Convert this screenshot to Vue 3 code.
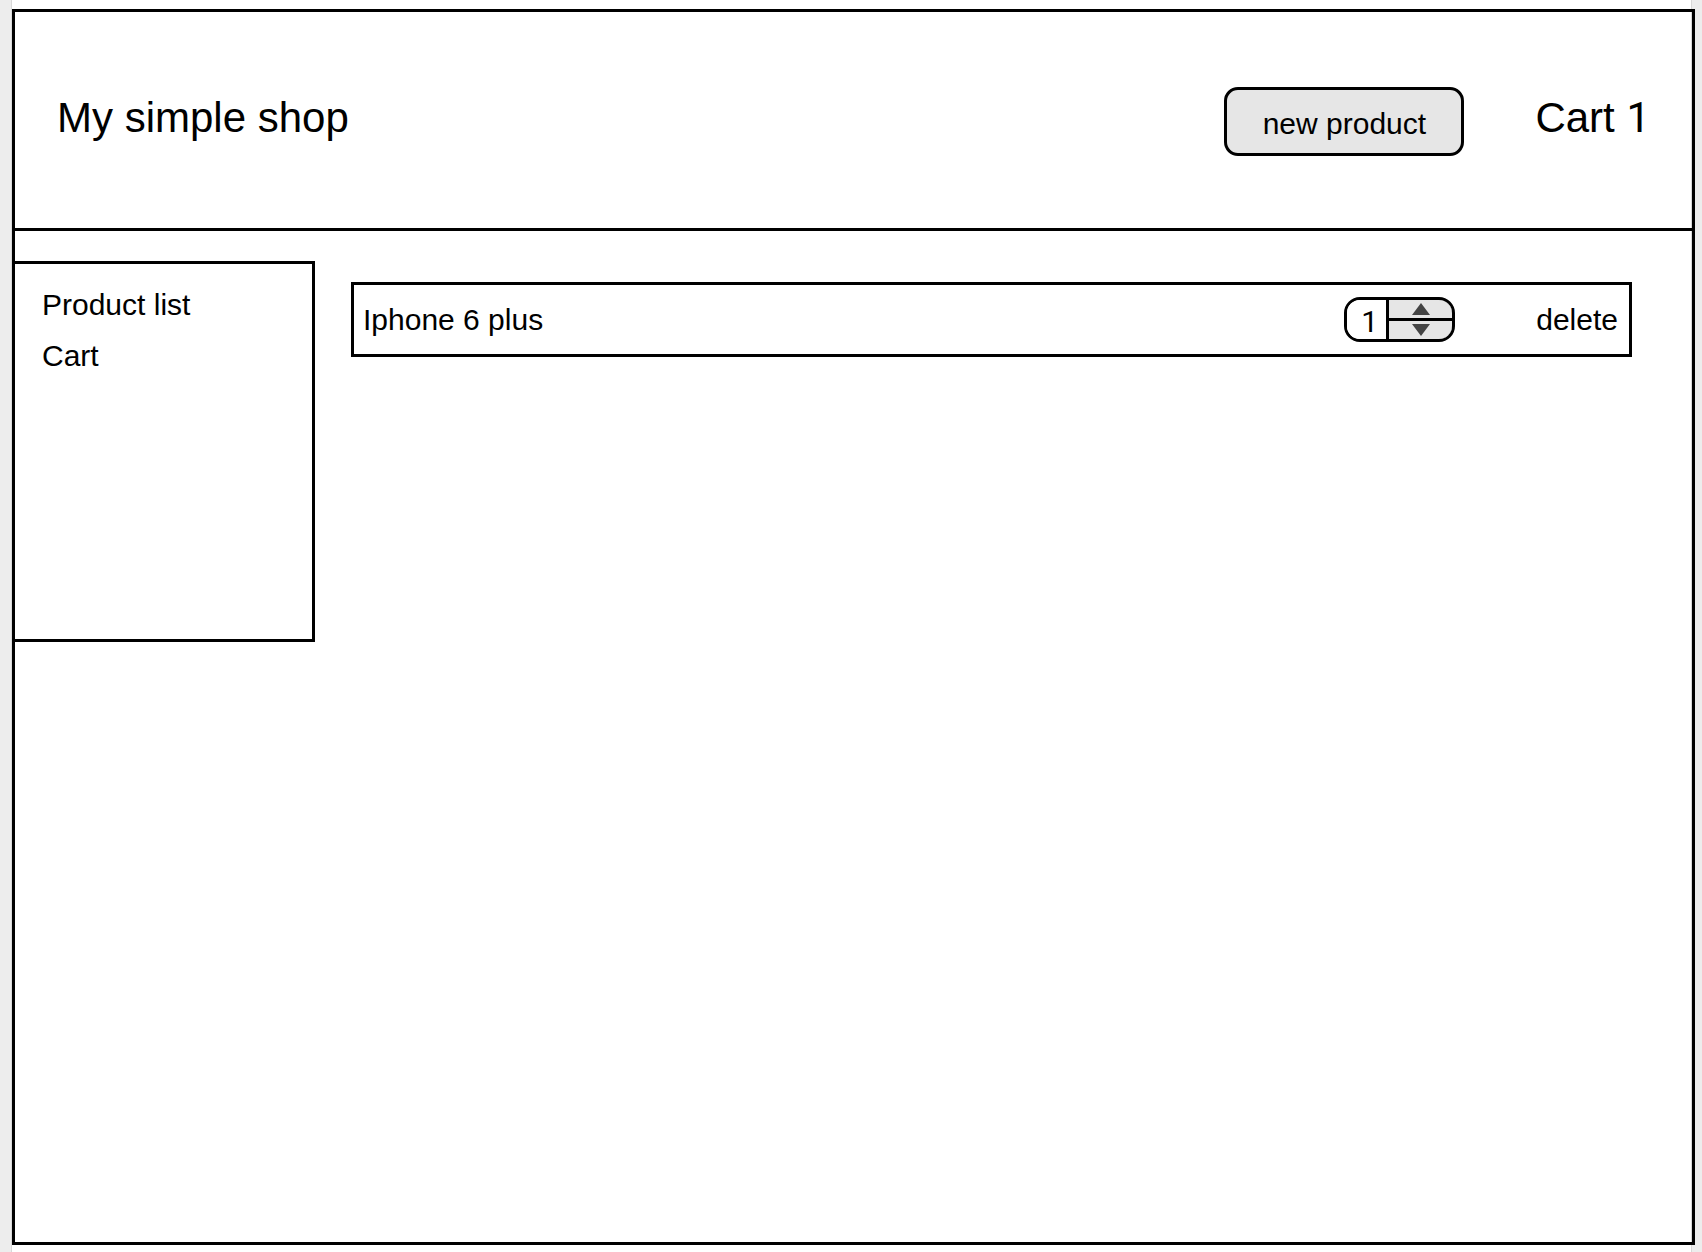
<script setup>
import { computed, ref } from 'vue'

const items = ref([{ id: 1, name: 'Iphone 6 plus', quantity: 1 }])

const cartCount = computed(() =>
  items.value.reduce((total, item) => total + Number(item.quantity), 0)
)

function step(item, amount) {
  item.quantity = Math.max(1, Number(item.quantity) + amount)
}

function remove(item) {
  items.value = items.value.filter((other) => other.id !== item.id)
}
</script>

<template>
  <div class="sheet">
    <div class="window">
      <header class="header">
        <h1 class="title">My simple shop</h1>
        <button class="new-product" type="button">new product</button>
        <a class="cart-link" href="#cart">Cart <span class="digit">{{ cartCount }}</span></a>
      </header>
      <div class="body">
        <nav class="sidebar">
          <a href="#products">Product list</a>
          <a href="#cart">Cart</a>
        </nav>
        <main class="content">
          <section v-for="item in items" :key="item.id" class="item">
            <label class="name" :for="`quantity-${item.id}`">{{ item.name }}</label>
            <div class="stepper">
              <input
                :id="`quantity-${item.id}`"
                v-model="item.quantity"
                class="quantity digit"
                type="text"
                inputmode="numeric"
              />
              <div class="arrows">
                <button type="button" aria-label="Increase quantity" @click="step(item, 1)">
                  <svg width="18" height="12" viewBox="0 0 18 12"><path d="M9 0 18 12H0Z" /></svg>
                </button>
                <button type="button" aria-label="Decrease quantity" @click="step(item, -1)">
                  <svg width="18" height="12" viewBox="0 0 18 12"><path d="M0 0H18L9 12Z" /></svg>
                </button>
              </div>
            </div>
            <button class="delete" type="button" @click="remove(item)">delete</button>
          </section>
        </main>
      </div>
    </div>
  </div>
</template>

<style>
body {
  margin: 0;
  background: #ededed;
}
</style>

<style scoped>
* {
  box-sizing: border-box;
}

.sheet {
  display: flex;
  min-height: 100vh;
  margin: 0 10px 0 11px;
  padding: 9px 0 7px;
  border: solid #d8d8d8;
  border-width: 0 1px;
  background: #fff;
  color: #000;
  font: 30px/51px "Liberation Sans", Arial, sans-serif;
}

.window {
  display: flex;
  flex: 1;
  flex-direction: column;
  margin-right: -4px;
  border: 3px solid #000;
}

.header {
  display: flex;
  align-items: flex-start;
  height: 219px;
  padding: 75px 42px 0;
  border-bottom: 3px solid #000;
}

.title,
.cart-link {
  margin: 0;
  font-size: 42px;
  font-weight: 400;
  line-height: 62px;
}

.title {
  flex: 1;
}

a {
  color: inherit;
  text-decoration: none;
}

button {
  margin: 0;
  padding: 0;
  border: 0;
  background: none;
  color: inherit;
  font: inherit;
  cursor: pointer;
}

.new-product {
  width: 240px;
  height: 69px;
  margin-right: 71px;
  padding-top: 4px;
  border: 3px solid #000;
  border-radius: 14px;
  background: #e6e6e6;
}

.digit {
  font-family: Roboto, "Liberation Sans", sans-serif;
}

.body {
  display: flex;
  align-items: flex-start;
  padding: 30px 60px 0 0;
}

.sidebar {
  display: flex;
  flex-direction: column;
  width: 300px;
  min-height: 381px;
  padding: 15px 27px;
  border: solid #000;
  border-width: 3px 3px 3px 0;
}

.content {
  flex: 1;
  padding: 21px 0 0 36px;
}

.item {
  display: flex;
  align-items: center;
  height: 75px;
  padding: 0 11px 0 9px;
  border: 3px solid #000;
}

.name {
  flex: 1;
}

.stepper {
  display: flex;
  width: 111px;
  height: 45px;
  margin-right: 81px;
  overflow: hidden;
  border: 3px solid #000;
  border-radius: 16px;
}

.quantity {
  width: 39px;
  padding: 4px 0 0 14px;
  border: 0;
  background: #fff;
  color: #000;
  font-size: 30px;
}

.arrows {
  display: flex;
  flex: 1;
  flex-direction: column;
  gap: 3px;
  border-left: 3px solid #000;
  background: #000;
}

.arrows button {
  display: flex;
  flex: 1;
  align-items: center;
  justify-content: center;
  background: #e6e6e6;
}

.arrows svg {
  fill: #444;
}
</style>
